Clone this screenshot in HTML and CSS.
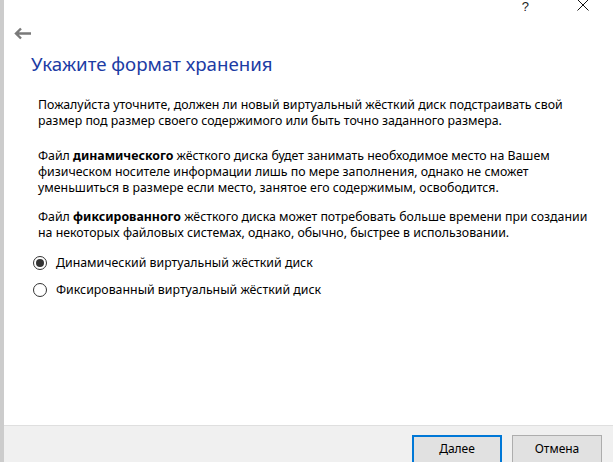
FILE: index.html
```html
<!DOCTYPE html>
<html lang="ru">
<head>
<meta charset="utf-8">
<link rel="stylesheet" href="styles.css">
</head>
<body>
<div class="window">
  <div class="edge"></div>
  <div class="dialog">
    <div class="main">
      <div class="titlebar">
        <span class="help">?</span>
        <svg class="close" width="12" height="12" viewBox="0 0 12 12"><path d="M0.5 0.5 L11.5 11.5 M11.5 0.5 L0.5 11.5" stroke="#111" stroke-width="1" fill="none"/></svg>
      </div>
      <div class="backrow">
        <svg class="back" width="17" height="13" viewBox="0 0 17 13"><path d="M17 6.5 H3 M7 1.5 L2 6.5 L7 11.5" stroke="#7a7a7a" stroke-width="2.4" fill="none"/></svg>
      </div>
      <h1 class="title">Укажите формат хранения</h1>
      <div class="content">
        <p class="para first">Пожалуйста уточните, должен ли новый виртуальный жёсткий диск подстраивать свой<br>размер под размер своего содержимого или быть точно заданного размера.</p>
        <p class="para">Файл <b>динамического</b> жёсткого диска будет занимать необходимое место на Вашем<br>физическом носителе информации лишь по мере заполнения, однако не сможет<br>уменьшиться в размере если место, занятое его содержимым, освободится.</p>
        <p class="para last">Файл <b>фиксированного</b> жёсткого диска может потребовать больше времени при создании<br>на некоторых файловых системах, однако, обычно, быстрее в использовании.</p>
        <div class="options">
          <label class="option"><span class="radio checked"></span>Динамический виртуальный жёсткий диск</label>
          <label class="option"><span class="radio"></span>Фиксированный виртуальный жёсткий диск</label>
        </div>
      </div>
    </div>
    <div class="footer">
      <button class="btn default">Далее</button>
      <button class="btn">Отмена</button>
    </div>
  </div>
</div>
</body>
</html>
```
FILE: styles.css
```css
html, body {
  margin: 0;
  padding: 0;
  background: #ffffff;
  height: 100%;
  overflow: hidden;
}
body {
  font-family: "Noto Sans", "Open Sans", sans-serif;
  font-size: 12.35px;
  color: #000;
}
.window {
  display: flex;
  height: 462px;
  width: 613px;
}
.edge {
  width: 4px;
  background: #cccccc;
  flex: none;
}
.dialog {
  flex: 1;
  display: flex;
  flex-direction: column;
}
.main {
  flex: 1;
  display: flex;
  flex-direction: column;
}
.titlebar {
  height: 14px;
  display: flex;
  justify-content: flex-end;
  align-items: flex-start;
  gap: 48px;
  padding-right: 24px;
}
.help {
  font-family: "Liberation Sans", sans-serif;
  font-size: 13px;
  line-height: 13px;
  color: #222;
  margin-top: 0;
}
.close {
  margin-top: -1px;
}
.backrow {
  height: 14px;
  padding: 13px 0 0 10px;
}
.back {
  display: block;
}
.title {
  margin: 10px 0 0 27px;
  font-weight: normal;
  font-size: 18.7px;
  line-height: 26px;
  color: #1c3ca4;
}
.content {
  padding: 20px 0 0 34px;
}
.para {
  margin: 0 0 13px 0;
  line-height: 16px;
}
.para.first {
  margin-bottom: 19px;
}
.para.last {
  margin-bottom: 13px;
}
.options {
  display: flex;
  flex-direction: column;
  gap: 10px;
}
.option {
  display: flex;
  align-items: center;
  gap: 9px;
  line-height: 17px;
}
.radio {
  width: 12px;
  height: 12px;
  border: 1px solid #333;
  border-radius: 50%;
  margin-left: -5px;
  display: flex;
  align-items: center;
  justify-content: center;
  box-sizing: content-box;
}
.radio.checked::after {
  content: "";
  width: 8px;
  height: 8px;
  border-radius: 50%;
  background: #333;
}
.footer {
  height: 37px;
  border-top: 1px solid #dfdfdf;
  background: #f0f0f0;
  display: flex;
  justify-content: flex-end;
  align-items: flex-start;
  gap: 10px;
  padding: 9px 11px 0 0;
  box-sizing: border-box;
}
.btn {
  font-family: inherit;
  font-size: 12px;
  width: 90px;
  height: 30px;
  padding: 0 0 4px 0;
  background: #e1e1e1;
  border: 1px solid #adadad;
  color: #000;
  flex: none;
}
.btn.default {
  border: 2px solid #0078d7;
}
```
